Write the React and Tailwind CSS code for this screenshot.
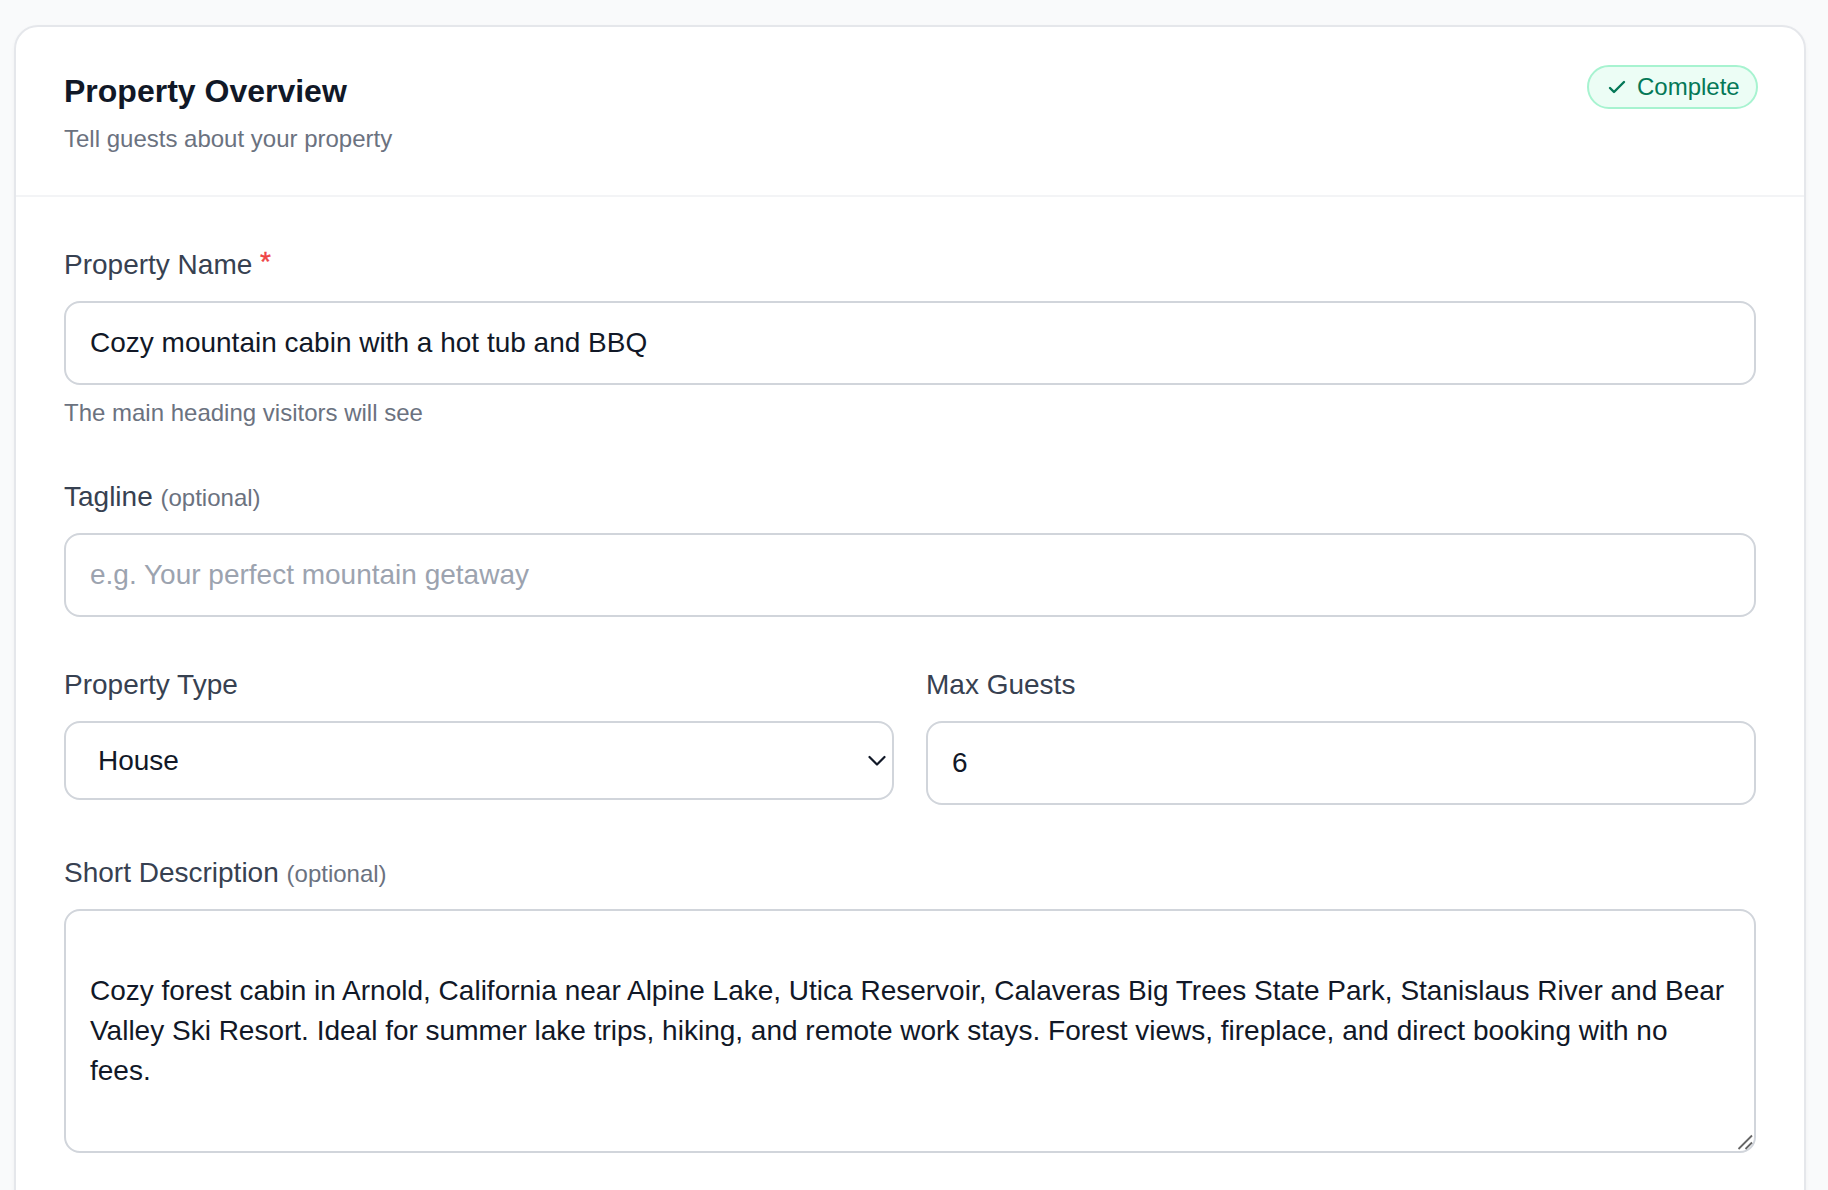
import React from "react";

function Label({ children, optional, required }) {
  return (
    <label className="mb-4 block h-10 whitespace-nowrap text-[28px] leading-10 text-[#374151]">
      {children}
      {required && <span className="relative -top-[3px] text-[#ef4444] [-webkit-text-stroke:0.4px_#ef4444]"> *</span>}
      {optional && (
        <>
          {" "}
          <span className="text-2xl leading-10 text-[#6b7280]">(optional)</span>
        </>
      )}
    </label>
  );
}

const box =
  "block w-full rounded-2xl border-2 border-[#d1d5db] bg-white text-[28px] leading-10 text-[#111827] outline-none placeholder:text-[#9ca3af] placeholder:opacity-100";

export default function App() {
  return (
    <div className="h-[1190px] overflow-hidden bg-[#f9fafb] pt-[25px] pr-[22px] pl-[14px] font-['Liberation_Sans',Arial,sans-serif]">
      <section className="h-[1250px] rounded-3xl border-2 border-[#e5e7eb] bg-white shadow-[0_2px_4px_rgba(0,0,0,0.04)]">
        <header className="flex items-start justify-between border-b-2 border-[#f3f4f6] px-12 py-10">
          <div>
            <h2 className="text-[32px] leading-[48px] font-bold text-[#111827]">Property Overview</h2>
            <p className="mt-2 text-2xl leading-8 text-[#6b7280]">Tell guests about your property</p>
          </div>
          <div className="-mt-0.5 -mr-0.5 flex h-11 w-[171px] items-center rounded-full border-2 border-[#a7f3d0] bg-[#ecfdf5] pl-4 text-2xl leading-8 text-[#047857]">
            <svg className="mr-2 h-6 w-6" viewBox="0 0 24 24" fill="none" stroke="currentColor" strokeWidth="2.4" strokeLinecap="round" strokeLinejoin="round">
              <path d="M5 13l4 4L19 7" />
            </svg>
            Complete
          </div>
        </header>
        <div className="flex flex-col gap-12 p-12">
          <div>
            <Label required>Property Name</Label>
            <input className={`${box} h-[84px] px-6`} defaultValue="Cozy mountain cabin with a hot tub and BBQ" />
            <p className="mt-3 text-2xl leading-8 text-[#6b7280]">The main heading visitors will see</p>
          </div>
          <div>
            <Label optional>Tagline</Label>
            <input className={`${box} h-[84px] px-6`} placeholder="e.g. Your perfect mountain getaway" />
          </div>
          <div className="grid grid-cols-2 items-start gap-8">
            <div>
              <Label>Property Type</Label>
              <div className={`${box} flex h-[79px] items-center justify-between pr-[5px] pl-8`}>
                <span>House</span>
                <svg className="h-5 w-5" viewBox="0 0 20 20" fill="none" stroke="currentColor" strokeWidth="2.2" strokeLinecap="round" strokeLinejoin="round">
                  <path d="M2.5 6l7.5 7.5 7.5-7.5" />
                </svg>
              </div>
            </div>
            <div>
              <Label>Max Guests</Label>
              <input className={`${box} h-[84px] px-6`} defaultValue="6" />
            </div>
          </div>
          <div>
            <Label optional>Short Description</Label>
            <div className="relative">
              <textarea
                className={`${box} h-[244px] resize-none overflow-hidden px-6 py-5`}
                defaultValue={
                  "\nCozy forest cabin in Arnold, California near Alpine Lake, Utica Reservoir, Calaveras Big Trees State Park, Stanislaus River and Bear Valley Ski Resort. Ideal for summer lake trips, hiking, and remote work stays. Forest views, fireplace, and direct booking with no fees."
                }
              />
              <svg className="absolute right-[3px] bottom-[3px] h-4 w-4 text-[#666]" viewBox="0 0 16 16" fill="none" stroke="currentColor" strokeWidth="1.8">
                <path d="M1.5 15L15 1.5M8.5 15L15 8.5" />
              </svg>
            </div>
          </div>
        </div>
      </section>
    </div>
  );
}
